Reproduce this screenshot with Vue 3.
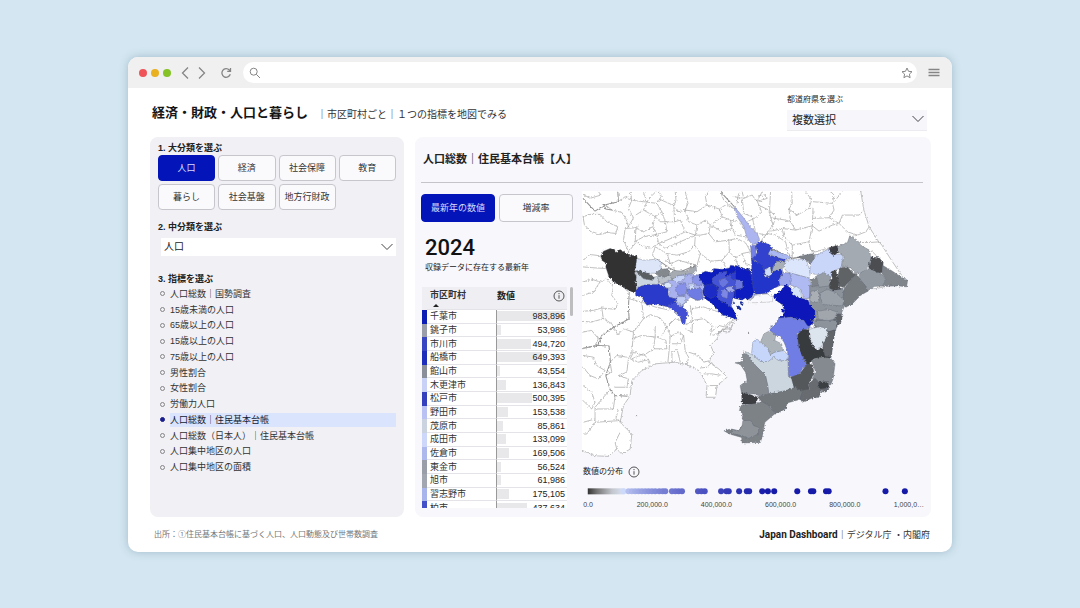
<script setup>
import { ref } from 'vue'

const categories = ['人口', '経済', '社会保障', '教育', '暮らし', '社会基盤', '地方行財政']
const category = ref('人口')
const indicators = [
  '人口総数｜国勢調査', '15歳未満の人口', '65歳以上の人口', '15歳以上の人口', '75歳以上の人口',
  '男性割合', '女性割合', '労働力人口', '人口総数｜住民基本台帳', '人口総数（日本人）｜住民基本台帳',
  '人口集中地区の人口', '人口集中地区の面積'
]
const indicator = ref('人口総数｜住民基本台帳')
const mode = ref('最新年の数値')

const cities = [
  ['千葉市', 983896, '#0c1eb4'], ['銚子市', 53986, '#9a9ea8'], ['市川市', 494720, '#3846c2'],
  ['船橋市', 649393, '#1d2eba'], ['館山市', 43554, '#8b8f99'], ['木更津市', 136843, '#c9d2f6'],
  ['松戸市', 500395, '#3440bc'], ['野田市', 153538, '#b9c2f2'], ['茂原市', 85861, '#ccd3e0'],
  ['成田市', 133099, '#ccd7fa'], ['佐倉市', 169506, '#adb8ec'], ['東金市', 56524, '#9a9ea8'],
  ['旭市', 61986, '#a2a6b0'], ['習志野市', 175105, '#a8b4ec'], ['柏市', 437634, '#4450c8']
]
const fmt = (n) => n.toLocaleString('en-US')
const barWidth = (n) => (n / 983896) * 97 + '%'

const ticks = ['0.0', '200,000.0', '400,000.0', '600,000.0', '800,000.0', '1,000,0…']
const dots = [
  145, 160, 170, 180, 190, 200, 210, 220, 230, 240, 252, 262, 270, 290, 300, 310, 320, 368, 378, 388,
  437, 453, 460, 491, 514, 521, 560, 577, 596, 665, 706, 713, 751, 759, 929, 987
]
const dotColor = (x) => {
  const t = Math.min(1, Math.max(0, (x - 145) / 430))
  const mix = (a, b) => Math.round(a + (b - a) * Math.pow(t, 0.6))
  return `rgb(${mix(205, 22)},${mix(217, 26)},${mix(250, 168)})`
}

/* Municipalities: [fill, outline] */
const tokyo = [
  ['#333333', '78 212 85 198 105 190 118 192 122 202 135 193 150 202 162 210 185 212 188 232 178 258 184 275 182 290 184 318 175 322 155 312 140 302 115 290 102 275 92 245 94 235 80 225'],
  ['#dce6f8', '185 219 205 225 245 222 258 230 258 250 245 264 215 264 190 258 180 256'],
  ['#ccd6e0', '178 258 205 280 232 285 245 270 252 296 210 298 185 307 182 290 184 275'],
  ['#5a5f63', '182 258 195 255 215 264 238 275 232 285 205 280'],
  ['#bcc3ca', '248 272 270 276 280 268 292 280 285 294 262 297 250 292'],
  ['#83898d', '240 264 256 252 280 250 284 266 270 276 248 272'],
  ['#a5abb1', '280 266 300 256 330 258 362 240 364 258 345 268 310 272 290 282'],
  ['#a9b2ee', '262 296 290 283 310 271 345 266 375 270 387 300 382 344 365 345 345 335 330 352 320 362 302 354 300 340 278 337 285 320'],
  ['#c9d5f8', '290 283 310 271 330 270 326 284 305 292'],
  ['#8690e8', '310 295 330 292 335 310 330 330 312 332 300 315'],
  ['#6e7be3', '335 312 378 308 383 342 365 345 345 335 335 325'],
  ['#8994e9', '350 275 375 272 384 295 370 302 352 292'],
  ['#cfddfa', '340 296 356 296 358 309 342 311'],
  ['#dbe7fb', '264 297 278 290 290 298 286 307 270 309'],
  ['#c3cef6', '305 334 330 334 332 350 318 360 304 350'],
  ['#2b3acb', '180 320 190 305 215 298 250 298 262 303 278 310 280 335 302 340 300 354 280 362 268 362 230 356 215 360 205 345 200 335 182 332'],
  ['#4350d4', '268 362 300 352 310 362 322 365 335 376 338 385 332 400 328 420 318 410 315 395 300 380 285 368'],
  ['#0c1dbe', '370 268 390 258 410 262 415 250 440 252 462 248 465 240 485 243 500 250 520 250 530 270 540 300 530 335 510 348 496 346 480 335 472 345 470 360 478 380 485 402 470 398 462 395 440 388 425 372 405 350 388 340 382 320 387 300 375 285'],
  ['#4453d6', '410 280 430 262 455 258 450 275 480 262 500 270 502 295 484 300 477 320 472 345 470 368 445 350 430 345 425 330 430 305 412 295'],
  ['#6a76e0', '430 285 450 278 460 290 448 304 434 302'],
  ['#2d3dd0', '460 265 485 262 488 278 470 284'],
  ['#7c87e6', '440 312 458 318 456 340 438 334'],
  ['#a2abee', '453 306 468 303 476 314 466 322 455 318'],
  ['#5f6cdd', '478 284 500 280 502 300 484 304'],
  ['#1c2cc6', '388 300 410 296 426 306 424 330 406 340 386 325'],
  ['#adb5f0', '478 66 488 78 502 95 520 120 545 145 552 162 545 175 530 178 515 160 505 125 485 95'],
  ['#7480e4', '525 180 548 180 540 200 550 215 540 226 528 226']
]
const north = [
  ['#3242cf', '62 178 78 168 105 180 110 192 98 208 130 218 150 222 150 230 125 235 118 255 105 276 85 275 88 255 75 240 60 225 48 222 65 205'],
  ['#2434cb', '48 222 75 235 88 255 88 272 100 278 110 258 135 250 142 262 130 285 135 300 110 312 95 324 60 327 50 300'],
  ['#0d1fc0', '0 240 45 258 52 300 56 325 30 345 0 340'],
  ['#6a77e0', '0 283 20 286 22 308 0 312'],
  ['#a9b7f2', '98 206 105 192 140 205 165 212 163 220 150 224 130 218'],
  ['#cddcf8', '88 252 105 245 108 270 88 276'],
  ['#a9b0b8', '115 240 125 228 148 230 148 246 135 252 108 260'],
  ['#dbe5fb', '148 228 170 222 212 222 217 240 225 262 220 280 195 272 160 264 150 255 146 240'],
  ['#9aa5ec', '130 285 142 260 165 265 168 292 160 302 133 300'],
  ['#b0baf2', '160 262 220 278 227 300 222 337 205 342 195 312 175 304 165 300 168 275'],
  ['#d5e4fb', '168 312 182 303 195 313 197 330 202 342 185 337 168 325'],
  ['#0717b8', '113 332 130 318 140 312 150 298 165 308 170 325 185 335 202 340 218 345 222 358 238 375 240 395 230 415 218 425 208 418 205 405 185 402 165 395 145 400 130 400 148 380 140 358 125 348'],
  ['#aab3f0', '44 345 58 326 70 334 56 350'],
  ['#7c8288', '185 216 205 210 235 205 238 225 225 238 212 225'],
  ['#8d939b', '222 300 280 300 322 312 338 345 325 365 310 400 300 430 295 455 240 455 235 425 240 400 238 375 222 358'],
  ['#c9d6fa', '240 212 280 190 290 205 318 208 325 225 314 248 292 258 285 276 270 280 245 268 222 264 224 238'],
  ['#3a3d42', '280 188 305 180 310 198 295 212 285 205'],
  ['#a4aab1', '305 185 335 172 342 152 365 165 375 180 400 195 408 225 397 247 378 264 358 264 345 248 318 246 318 230 325 215 308 200'],
  ['#4b4e51', '406 215 430 218 442 232 440 262 420 265 398 248'],
  ['#9298a0', '370 265 400 250 425 262 440 268 450 285 440 302 415 304 395 318 385 300 372 285'],
  ['#80858b', '440 240 470 258 495 275 515 285 512 305 490 302 440 303 450 284 438 262'],
  ['#606466', '305 278 312 248 335 245 350 262 362 268 355 282 337 292 325 307 308 302'],
  ['#46494b', '278 292 290 280 285 260 300 255 308 280 308 300 316 312 295 315 282 310'],
  ['#757a7f', '338 290 362 265 375 285 388 300 396 318 375 330 350 355 330 366 320 345 325 312'],
  ['#7f858b', '224 283 245 275 247 300 230 305'],
  ['#979da4', '242 272 265 262 285 275 280 302 250 306'],
  ['#9ba1a8', '250 325 275 312 300 322 325 345 320 362 295 360 262 358'],
  ['#a9afb5', '226 318 245 315 252 330 250 350 232 352 222 345'],
  ['#a0a6ac', '245 378 280 372 305 380 296 400 275 408 248 400'],
  ['#85898f', '242 402 270 410 290 412 285 432 255 426 240 424'],
  ['#5e6266', '290 412 308 385 322 388 315 412 300 428']
]
const boso = [
  ['#8d939b', '225 -15 305 -15 300 15 280 18 265 8 245 6'],
  ['#6f7de5', '105 30 106 0 112 5 130 -22 165 -25 185 -18 205 -15 215 0 225 5 205 15 183 25 190 50 195 75 205 100 215 118 200 130 192 145 170 157 158 150 158 95 155 75 145 50 130 30'],
  ['#383b3d', '185 28 200 12 220 12 220 35 232 60 245 75 265 65 265 40 275 20 298 14 294 40 285 100 265 95 235 100 215 118 205 100 190 70'],
  ['#62666a', '262 45 275 20 298 14 294 40 286 95 268 92 262 70'],
  ['#dce5ee', '220 12 250 4 272 8 276 28 257 64 240 72 226 50'],
  ['#858a90', '228 105 250 95 285 98 298 115 292 160 285 178 250 170 230 160 240 140'],
  ['#54585a', '165 155 192 145 215 115 230 118 236 145 218 175 222 195 180 200 172 180'],
  ['#686c70', '195 195 222 190 218 175 238 158 252 172 250 185 280 190 270 200 255 198 250 215 228 218 200 230 190 215'],
  ['#3c3f42', '248 170 275 168 282 188 250 190'],
  ['#ccd6de', '28 78 55 90 75 108 98 105 115 90 130 105 157 100 158 150 168 160 175 187 150 197 100 206 95 180 90 150 60 120'],
  ['#acb4ba', '75 50 85 25 105 15 120 30 118 45 138 55 142 76 120 82 105 88 95 65'],
  ['#c6d6fa', '48 85 52 50 65 40 75 52 95 65 104 88 118 80 145 75 160 92 150 105 130 106 115 95 98 108 75 108'],
  ['#858b90', '-2 112 22 108 20 85 32 84 60 120 90 150 97 180 100 206 75 212 55 205 18 202 14 180 35 165 30 140 15 118'],
  ['#3a3d3f', '18 200 40 205 68 215 60 236 20 236'],
  ['#72777b', '66 214 100 205 150 195 180 185 200 200 192 222 155 232 150 250 118 266 105 245 80 230'],
  ['#7d8287', '15 240 60 234 80 228 100 240 118 264 88 290 82 325 75 350 20 352 18 335 -18 325 -35 315 -12 310 10 315 20 300 30 290 20 280 22 265 12 255'],
  ['#8d9398', '22 285 45 284 55 300 70 305 68 325 40 338 18 330 -14 322 -10 312 10 315 20 300']
]

const land = '0 0 850 0 855 20 864 75 880 125 905 165 918 180 940 215 970 260 992 290 900 310 700 310 700 340 605 345 575 325 545 322 520 350 490 345 470 335 478 385 485 402 470 405 455 425 430 440 425 460 405 480 415 500 400 530 430 550 455 575 425 600 420 635 392 635 395 600 380 570 370 555 335 538 300 530 240 535 200 555 170 585 165 630 145 660 135 710 170 745 165 790 140 805 125 790 100 812 60 810 24 795 0 785'

const borders = [
  '24 95 45 88 75 88 95 110 128 125 122 145 95 142 75 148 45 138 28 118 24 95',
  '24 28 45 40 78 30 70 20', '92 60 110 75 140 82 152 100 160 125 150 130 180 128 190 120',
  '150 130 145 165 160 200 180 175 182 130', '182 90 205 75 215 50 205 22', '160 125 175 98 160 70 170 45 165 20',
  '130 50 150 35 165 45 205 50 245 55 260 80 240 95 205 75', '215 50 230 32 242 20', '245 55 258 35 252 20',
  '300 20 302 45 296 62 310 80 330 75', '252 42 296 62', '330 20 338 55 330 75 340 110 365 120 360 150 330 140 315 105 298 110 296 62',
  '260 80 270 110 298 110', '182 128 205 140 232 125 240 95 255 110 270 110 275 140 245 148 232 125',
  '182 168 205 155 245 148 250 175 225 190 195 180 182 168', '250 175 275 165 310 150 330 140',
  '240 185 232 210 240 222', '250 175 270 190 310 172 360 150 358 180 340 200 305 210 275 205 240 185',
  '275 205 285 235 310 225 345 235 362 240', '358 180 375 205 365 240 345 235', '270 225 285 235 300 255',
  '365 120 390 105 405 120 400 145 375 150 360 150', '330 75 365 80 395 60 432 72 440 95 405 120',
  '395 60 390 35 400 20', '432 72 450 60 475 70', '435 20 445 45 475 70', '440 95 465 105 470 130 440 140 420 128 405 120',
  '400 145 420 170 460 165 462 200 440 225 405 228 375 205', '465 105 490 110 505 130', '470 130 480 150 510 155',
  '460 165 485 160 512 175 525 200 500 205 480 220 462 200', '440 225 450 245', '480 220 488 242', '500 205 510 235 525 240',
  '475 35 505 40 530 30 540 45 560 50', '500 20 505 40', '515 110 540 98 560 80', '24 225 45 208 78 212',
  '24 245 60 248 92 250', '24 290 50 282 75 290 95 280 115 305 110 330 128 355 120 372 80 368 55 375 24 378',
  '75 290 55 320 24 330', '115 290 140 302 162 322', '80 368 85 400 50 410 24 408', '85 400 110 415 128 448',
  '162 340 205 352 240 365 285 375', '205 400 225 388 255 398 275 425 260 450', '175 440 205 400 200 350',
  '275 425 300 400 315 405', '330 420 352 405 345 360', '352 405 385 400 410 420 405 450', '345 370 385 365 430 380',
  '352 405 350 440 330 430', '24 440 50 435 70 460 60 480 24 490', '128 448 145 430 175 440 170 500 160 520 155 560 130 570',
  '170 460 200 450 240 455 240 425', '175 500 205 510 235 490 240 455', '235 490 275 490 272 465 245 455',
  '275 425 285 450 282 490 278 530', '282 455 310 440 325 450 315 475 290 475', '290 530 290 500 305 490 315 530',
  '325 450 330 500 340 515 335 538', '340 500 370 510 385 530 405 525', '175 500 165 520 190 530 220 522 225 535',
  '220 522 205 505 170 520', '24 510 55 515 65 540 90 555 70 580 45 570 24 545', '92 570 110 560 105 530 125 510 155 515',
  '130 570 160 580 155 605 118 605', '24 600 50 620 60 650 50 670 24 645', '105 612 60 665 60 710 130 705',
  '60 670 115 670 120 630', '24 710 60 700', '60 710 35 745 24 745', '130 670 122 700 140 710', '135 740 120 770 125 790',
  '372 548 395 545 410 530', '385 565 410 565 440 570', '400 600 425 600',
  '485 55 490 22', '500 42 505 85 530 95 540 140', '558 80 545 48 560 20', '548 60 580 75 592 120 570 150 550 145',
  '585 20 582 75 600 95 590 130', '648 20 650 55 640 72 665 90 700 70 708 45 690 20', '640 72 645 110 660 135 710 122 712 70 700 70',
  '712 50 770 55 775 30 765 20', '712 100 760 98 775 75 770 55', '710 122 730 138 770 120 790 115 760 98',
  '550 175 575 145 600 150 630 170 635 190', '580 140 620 130 660 135', '620 130 625 155 650 180 700 170 710 122',
  '650 180 650 218', '700 170 705 195 722 210', '790 115 815 140 845 150 870 140 880 125', '775 50 800 20',
  '790 115 800 90 850 90 864 75', '845 150 825 155', '850 172 885 172 910 170', '860 185 890 200 905 215',
  '630 190 648 218 685 215', '705 195 720 200 770 185', '550 48 575 40 570 30 548 32', '585 98 630 105 645 110'
]
const prefBorders = [
  '24 40 60 78 88 60 130 50 128 20', '88 60 92 72 110 75', '162 322 160 365 162 400 135 415 125 420 80 450 68 480 24 488',
  '68 480 102 482 106 530 92 570 105 612 120 630 160 632', '245 222 285 250 310 262 362 240',
  '435 20 478 66', '550 175 600 196 650 220 700 212 762 205 790 185 815 180 824 155'
]
const bayPlots = ['410 438 430 420 448 425 460 410 475 412 462 430 440 432 428 445', '412 450 440 440 450 428', '432 437 462 440 470 422']
</script>

<template>
  <main class="page">
    <section class="window">
      <header class="chrome">
        <span class="lights"><i class="red"></i><i class="amber"></i><i class="green"></i></span>
        <button class="icon" aria-label="戻る"><svg width="8" height="14" viewBox="0 0 8 14"><path d="M7 1.5 1.5 7 7 12.500" /></svg></button>
        <button class="icon" aria-label="進む"><svg width="8" height="14" viewBox="0 0 8 14"><path d="M1 1.500 6.500 7 1 12.500" /></svg></button>
        <button class="icon reload" aria-label="再読み込み"><svg width="12" height="12" viewBox="0 0 12 12"><path d="M10.300 7.300A4.300 4.300 0 1 1 9.300 3L10.300 4M10.500 1V4.300H7.200" /></svg></button>
        <div class="address">
          <svg width="12" height="12" viewBox="0 0 12 12"><circle cx="4.700" cy="4.700" r="3.500" /><path d="M7.300 7.300 11 11" /></svg>
          <input type="text" aria-label="アドレス" />
          <svg width="12" height="12" viewBox="0 0 12 12"><path d="M6 1 7.500 4.300 11 4.700 8.400 7.100 9.100 10.700 6 8.900 2.900 10.700 3.600 7.100 1 4.700 4.500 4.300Z" /></svg>
        </div>
        <button class="icon menu" aria-label="メニュー"><svg width="12" height="10" viewBox="0 0 12 10"><path d="M.5 1.500H11.500M.5 4.500H11.500M.5 7.500H11.500" /></svg></button>
      </header>

      <div class="content">
        <div class="top">
          <h1>経済・財政・人口と暮らし<span>｜市区町村ごと｜１つの指標を地図でみる</span></h1>
          <div class="region">
            <label for="pref">都道府県を選ぶ</label>
            <div class="select">
              <select id="pref"><option>複数選択</option></select>
              <svg width="12" height="8" viewBox="0 0 12 8"><path d="M.5 1 6 6.500 11.500 1" /></svg>
            </div>
          </div>
        </div>

        <div class="columns">
          <aside class="side">
            <h2>1. 大分類を選ぶ</h2>
            <div class="cats">
              <button v-for="c in categories" :key="c" class="chip" :class="{ on: c === category }" @click="category = c">{{ c }}</button>
            </div>
            <h2><label for="mid">2. 中分類を選ぶ</label></h2>
            <div class="select white">
              <select id="mid"><option>人口</option></select>
              <svg width="12" height="8" viewBox="0 0 12 8"><path d="M.5 1 6 6.500 11.500 1" /></svg>
            </div>
            <h2 class="third">3. 指標を選ぶ</h2>
            <div class="list">
              <label v-for="n in indicators" :key="n" :class="{ on: n === indicator }">
                <input v-model="indicator" type="radio" name="indicator" :value="n" /><span>{{ n }}</span>
              </label>
            </div>
          </aside>

          <section class="main">
            <h2>人口総数｜住民基本台帳【人】</h2>
            <div class="body">
              <div class="data">
                <div class="tabs">
                  <button v-for="m in ['最新年の数値', '増減率']" :key="m" class="chip" :class="{ on: m === mode }" @click="mode = m">{{ m }}</button>
                </div>
                <p class="year">2024</p>
                <p class="note">収録データに存在する最新年</p>
                <div class="tablebox">
                  <div class="clip">
                    <table>
                      <thead>
                        <tr>
                          <th class="key"></th>
                          <th class="name">市区町村<i></i></th>
                          <th class="num"><div>数値<svg class="info" width="12" height="12" viewBox="0 0 12 12"><circle cx="6" cy="6" r="5" /><path d="M6 5.200V8.700M6 3V4.200" /></svg></div></th>
                        </tr>
                      </thead>
                      <tbody>
                        <tr v-for="c in cities" :key="c[0]">
                          <td class="key" :style="{ background: c[2] }"></td>
                          <td class="name">{{ c[0] }}</td>
                          <td class="num"><div><b :style="{ width: barWidth(c[1]) }"></b><span>{{ fmt(c[1]) }}</span></div></td>
                        </tr>
                      </tbody>
                    </table>
                  </div>
                  <span class="thumb"></span>
                </div>
              </div>

              <div class="mapcol">
                <svg class="map" viewBox="21 18 1020 822" role="img" aria-label="市区町村別の人口総数の地図">
                  <defs>
                    <filter id="rough" x="0" y="0" width="100%" height="100%">
                      <feTurbulence type="fractalNoise" baseFrequency="0.16" numOctaves="2" seed="4" />
                      <feDisplacementMap in="SourceGraphic" scale="9" xChannelSelector="R" yChannelSelector="G" />
                    </filter>
                  </defs>
                  <g filter="url(#rough)">
                    <polygon class="land" :points="land" />
                    <polyline v-for="(b, i) in borders" :key="'b' + i" class="line" :points="b" />
                    <polyline v-for="(b, i) in prefBorders" :key="'p' + i" class="line pref" :points="b" />
                    <polyline v-for="(b, i) in bayPlots" :key="'y' + i" class="line" :points="b" />
                    <polygon v-for="(r, i) in tokyo" :key="'t' + i" class="area" :fill="r[0]" :points="r[1]" />
                    <g transform="translate(480 0)"><polygon v-for="(r, i) in north" :key="i" class="area" :fill="r[0]" :points="r[1]" /></g>
                    <g transform="translate(480 420)"><polygon v-for="(r, i) in boso" :key="i" class="area" :fill="r[0]" :points="r[1]" /></g>
                    <polygon points="520 346 540 330 575 326 593 334 590 350 540 352 510 352" fill="#f8f8fd" />
                    <path d="M472 340 500 345 510 338 520 350 500 375 488 405 478 380 468 362Z" fill="#f8f8fd" />
                    <path d="M484 360 492 362 498 370 490 374 482 368ZM496 347 504 352 502 362 494 356ZM472 345 478 352 474 358Z" fill="#1b2f9c" />
                    <circle cx="519" cy="444" r="2" fill="#999" /><circle cx="184" cy="692" r="2" fill="#999" />
                    <path d="M619 370 628 374 626 382 618 380Z" fill="#0717b8" />
                  </g>
                </svg>
                <p class="dist">数値の分布<svg class="info" width="12" height="12" viewBox="0 0 12 12"><circle cx="6" cy="6" r="5" /><path d="M6 5.200V8.700M6 3V4.200" /></svg></p>
                <svg class="strip" viewBox="21 80 1020 26" role="img" aria-label="数値の分布">
                  <defs>
                    <linearGradient id="scale"><stop offset="0" stop-color="#333" /><stop offset=".25" stop-color="#777" /><stop offset=".65" stop-color="#c3c6cc" /><stop offset="1" stop-color="#dbe5fb" /></linearGradient>
                  </defs>
                  <rect x="38" y="84" width="112" height="18" fill="url(#scale)" />
                  <circle v-for="x in dots" :key="x" :cx="x" cy="93" r="9" :fill="dotColor(x)" />
                </svg>
                <div class="ticks"><span v-for="t in ticks" :key="t">{{ t }}</span></div>
              </div>
            </div>
          </section>
        </div>

        <footer>
          <p>出所：①住民基本台帳に基づく人口、人口動態及び世帯数調査</p>
          <p class="brand"><strong>Japan Dashboard</strong>｜デジタル庁 ・内閣府</p>
        </footer>
      </div>
    </section>
  </main>
</template>

<style>
body { margin: 0; background: #d3e6f1; }
</style>

<style scoped>
* { box-sizing: border-box; }
.page { min-height: 100vh; padding: 57px 128px; background: #d3e6f1; color: #222; font-family: "Liberation Sans", "Noto Sans CJK JP", sans-serif; font-size: 9px; line-height: 12px; }
h1, h2, p { margin: 0; }
button, input, select { font: inherit; color: inherit; margin: 0; padding: 0; border: 0; background: none; }
svg { flex: none; fill: none; stroke: #858585; stroke-width: 1; }
.window { background: #fff; border-radius: 10px; overflow: hidden; box-shadow: 0 0 8px rgba(70, 110, 130, .35); }
.chrome { display: flex; align-items: center; height: 31px; padding: 0 12px 0 11px; background: #f0f0f0; }
.lights { display: flex; gap: 4px; margin-right: 10px; }
.lights i { width: 8px; height: 8px; border-radius: 50%; }
.red { background: #ee5458; }
.amber { background: #e9b01f; }
.green { background: #84c225; }
.icon { display: flex; margin-right: 9px; }
.icon svg { stroke-width: 1.300; }
.reload { margin: 0 11px 0 5px; }
.menu { margin: 0 0 0 11px; }
.address { flex: 1; display: flex; align-items: center; height: 21px; padding: 0 4px 0 6px; background: #fff; border-radius: 11px; }
.address input { flex: 1; min-width: 0; outline: none; }
.content { padding: 6px 21px 8px 22px; }
.top { display: flex; justify-content: space-between; height: 43px; padding-right: 4px; }
h1 { display: flex; align-items: center; height: 16px; margin: 11px 0 0 2px; font-size: 13px; color: #151515; }
h1 span { margin-left: 9px; padding-top: 3px; font-size: 10px; font-weight: 400; color: #333; }
.region { width: 140px; font-size: 8px; }
.region label { display: block; height: 16px; }
.select { position: relative; height: 21px; background: #f6f6fb; }
.select select { appearance: none; width: 100%; height: 100%; padding-left: 5px; font-size: 11px; border-bottom: 1px solid #ececf0; }
.select svg { position: absolute; right: 3px; top: 5px; stroke: #444; pointer-events: none; }
.select.white { height: 18px; margin: 5px 0 0 3px; background: #fff; }
.white select { padding-left: 3px; font-size: 10px; border: 0; }
.white svg { top: 5px; }
.columns { display: grid; grid-template-columns: 254fr 516fr; gap: 11px; }
.side { min-width: 0; padding: 5px 8px 42px; background: #f0f0f5; border-radius: 8px; }
.side h2 { font-size: 9px; line-height: 12px; color: #222; }
.cats { display: grid; grid-template-columns: repeat(4, 1fr); gap: 3px; margin: 1px 0 11px; }
.chip { height: 26px; border: 1px solid #c6c6cc; border-radius: 4px; background: #fafafd; color: #333; white-space: nowrap; }
.chip.on { background: #0314b9; border-color: #0314b9; color: #d9dcff; }
.side .third { margin-top: 17px; }
.list { display: grid; grid-auto-rows: 1fr; height: 189px; margin-top: 1px; color: #333; }
.list label { display: flex; align-items: center; }
.list input { appearance: none; width: 5px; height: 5px; margin: 0 5px 0 2px; border: 1px solid #858585; border-radius: 50%; }
.list .on input { border-color: #1a1f8c; background: #1a1f8c; }
.list span { flex: 1; height: 14px; line-height: 14px; }
.list .on span { background: #dae4fd; color: #123; }
.main { min-width: 0; padding: 0 8px 0 6px; background: #f7f7fc; border-radius: 8px; }
.main h2 { height: 46px; padding: 15px 0 0 2px; font-size: 11px; line-height: 15px; border-bottom: 1px solid #c4c4ca; color: #222; }
.body { display: flex; gap: 9px; padding-top: 8px; }
.data { flex: 0 0 152px; padding-top: 3px; }
.tabs { display: grid; grid-template-columns: 1fr 1fr; gap: 4px; }
.tabs .chip { height: 28px; }
.year { margin: 14px 0 0 4px; font-family: Roboto, sans-serif; font-weight: 500; font-size: 22px; line-height: 24px; color: #111; }
.note { margin: 2px 0 0 4px; font-size: 8px; line-height: 12px; }
.tablebox { display: flex; gap: 3px; margin: 13px 0 0 1px; }
.clip { flex: 1; height: 221px; overflow: hidden; }
.thumb { width: 3px; height: 29px; border-radius: 2px; background: #bdbdbf; }
table { width: 100%; height: 228px; border-collapse: separate; border-spacing: 0; table-layout: fixed; background: #fff; }
th, td { padding: 0; height: 13px; line-height: 12px; border-bottom: 1px solid #e4e4e8; white-space: nowrap; }
th { height: 23px; background: #efeff3; text-align: left; vertical-align: top; }
.key { width: 5px; border: 0; }
.name { width: 70px; padding-left: 3px; border-right: 1px solid #999; color: #333; }
th.name { padding-top: 2px; border-right-color: #efeff3; position: relative; }
th i { position: absolute; left: 6px; bottom: 2px; border: 3px solid transparent; border-top: 0; border-bottom-color: #222; }
.num div { position: relative; display: flex; justify-content: flex-end; padding-right: 2px; }
th.num div { justify-content: space-between; align-items: center; height: 18px; }
.num b { position: absolute; left: 0; top: 1px; height: 10px; background: #e8e8ea; }
.num span { position: relative; }
.mapcol { flex: 1; min-width: 0; }
.map { display: block; width: 100%; }
.land { fill: #fff; stroke: #a2a2a4; stroke-width: 2; }
.line { stroke: #a0a0a0; stroke-width: 2; stroke-linejoin: round; }
.pref { stroke: #929292; stroke-width: 3; }
.area { stroke: #555b69; stroke-width: 1; }
.dist { display: flex; align-items: center; gap: 5px; margin-left: 1px; font-size: 8px; line-height: 12px; }
.info { stroke: #555; }
.strip { display: block; width: 100%; margin-top: 9px; stroke: none; }
.strip circle, .strip rect { stroke: none; }
.map > g > path, .map circle { stroke: none; }
.ticks { display: grid; grid-template-columns: repeat(6, 1fr); margin: 0 -18px 0 -26px; padding-top: 4px; font-size: 7px; line-height: 12px; text-align: center; color: #444; }
footer { display: flex; justify-content: space-between; align-items: center; height: 18px; margin-top: 9px; padding: 0 1px 0 4px; font-size: 8px; color: #777; }
.brand { font-size: 9px; color: #333; }
.brand strong { font-family: Roboto, sans-serif; font-size: 10px; color: #222; }
</style>
